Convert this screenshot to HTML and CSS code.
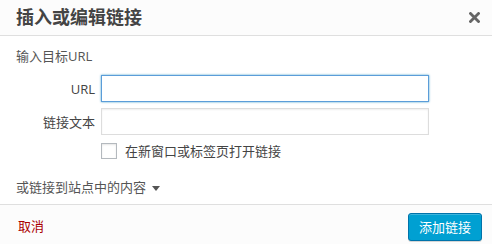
FILE: index.html
```html
<!DOCTYPE html>
<html lang="zh-CN">
<head>
  <meta charset="UTF-8" />
  <title>插入或编辑链接</title>
  <link rel="stylesheet" href="styles.css">
</head>
<body>
  <div class="modal">
    <div class="modal-title">
      <h1>插入或编辑链接</h1>
      <button class="close" type="button" aria-label="关闭">
        <svg width="11" height="11" viewBox="0 0 11 11">
          <path d="M1.5 1.5 L9.5 9.5 M9.5 1.5 L1.5 9.5" stroke="#666" stroke-width="2.8" stroke-linecap="square" />
        </svg>
      </button>
    </div>

    <div class="modal-body">
      <p class="howto">输入目标URL</p>

      <label class="field">
        <span>URL</span>
        <input type="text" class="focused" />
      </label>

      <label class="field">
        <span>链接文本</span>
        <input type="text" />
      </label>

      <label class="check">
        <input type="checkbox" />
        <span>在新窗口或标签页打开链接</span>
      </label>

      <p class="toggle">或链接到站点中的内容 <i class="arrow"></i></p>
    </div>

    <div class="modal-footer">
      <a href="#" class="cancel">取消</a>
      <button type="button" class="button-primary">添加链接</button>
    </div>
  </div>
</body>
</html>
```

FILE: styles.css
```css
body {
  margin: 0;
  font-family: "Open Sans", "Noto Sans CJK SC", sans-serif;
  font-size: 13px;
  color: #555;
  background: #fff;
}

.modal {
  width: 492px;
  height: 244px;
  display: flex;
  flex-direction: column;
}

.modal-title {
  height: 35px;
  background: #fcfcfc;
  border-bottom: 1px solid #dfdfdf;
  display: flex;
  align-items: center;
  justify-content: space-between;
  padding-left: 16px;
}

.modal-title h1 {
  margin: 0;
  font-size: 18px;
  font-weight: 600;
  line-height: 35px;
  color: #444;
}

.close {
  width: 36px;
  height: 35px;
  border: none;
  background: none;
  padding: 0;
  display: flex;
  align-items: center;
  justify-content: center;
}

.modal-body {
  flex: 1;
  padding: 11px 16px 0;
}

.howto {
  margin: 0 0 10px;
  line-height: 18px;
  color: #555;
}

.field {
  display: flex;
  align-items: center;
  margin-bottom: 6px;
}

.field span {
  width: 79px;
  margin-right: 6px;
  text-align: right;
  color: #444;
}

.field input {
  width: 328px;
  height: 27px;
  box-sizing: border-box;
  border: 1px solid #ddd;
  box-shadow: inset 0 1px 2px rgba(0, 0, 0, 0.07);
  padding: 3px 5px;
  font-size: 13px;
  margin: 0;
}

.field input.focused {
  border-color: #5b9dd9;
  box-shadow: 0 0 2px rgba(30, 140, 190, 0.8);
}

.check {
  display: flex;
  align-items: center;
  margin-top: 6px;
  padding-left: 85px;
  color: #444;
}

.check input {
  appearance: none;
  width: 16px;
  height: 16px;
  margin: 0 8px 0 0;
  border: 1px solid #b4b9be;
  background: #fff;
  box-shadow: inset 0 1px 2px rgba(0, 0, 0, 0.1);
}

.toggle {
  margin: 18px 0 0;
  line-height: 18px;
  color: #555;
}

.arrow {
  display: inline-block;
  width: 0;
  height: 0;
  border-left: 4px solid transparent;
  border-right: 4px solid transparent;
  border-top: 5px solid #555;
  margin-left: 3px;
  vertical-align: 1px;
}

.modal-footer {
  background: #fcfcfc;
  border-top: 1px solid #dfdfdf;
  display: flex;
  align-items: flex-start;
  justify-content: space-between;
  padding: 8px 10px 0 18px;
  height: 31px;
}

.cancel {
  color: #a00;
  text-decoration: none;
  line-height: 26px;
}

.button-primary {
  height: 28px;
  padding: 0 10px;
  background: #00a0d2;
  border: 1px solid #0073aa;
  border-radius: 3px;
  box-shadow: inset 0 1px 0 rgba(120, 200, 230, 0.5), 0 1px 0 rgba(0, 0, 0, 0.15);
  color: #fff;
  font-family: "Open Sans", "Noto Sans CJK SC", sans-serif;
  font-size: 13px;
  line-height: 26px;
  cursor: pointer;
}
```
